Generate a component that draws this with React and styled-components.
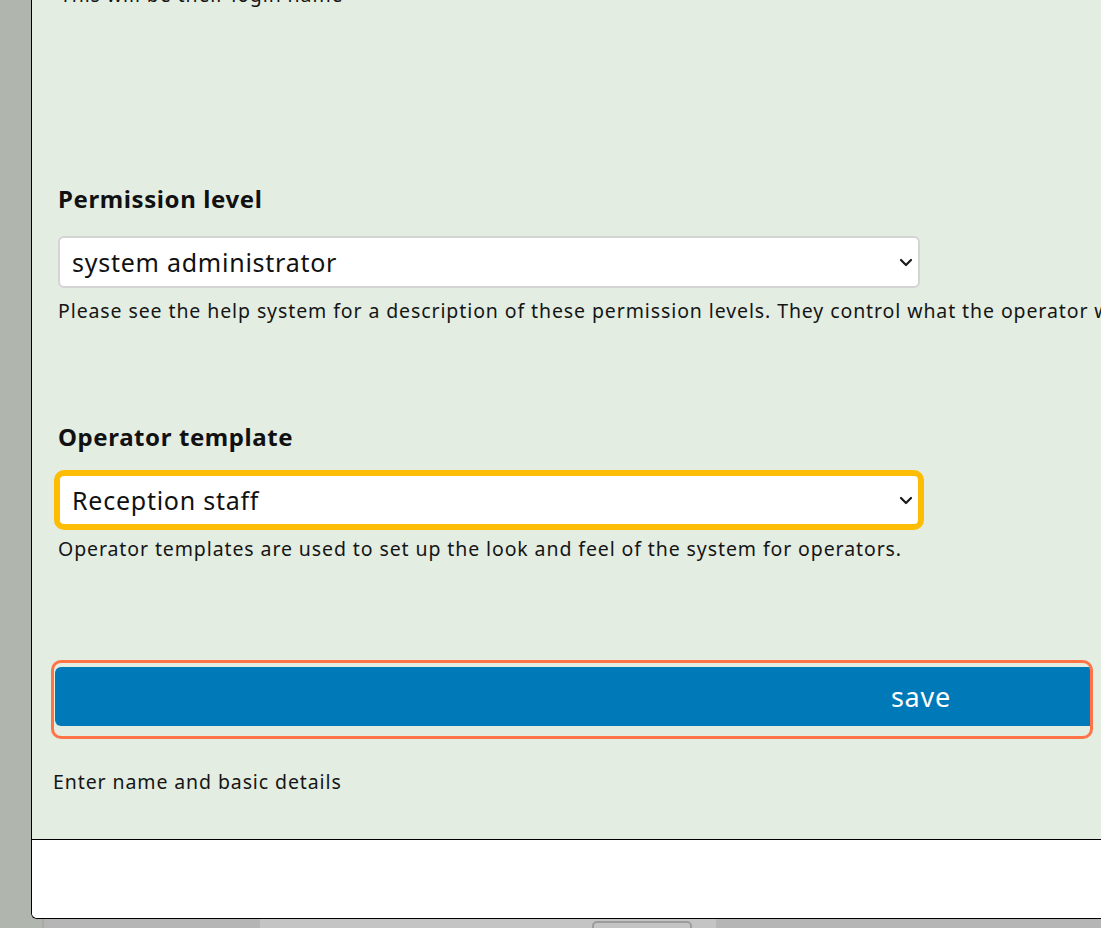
import React from 'react';
import styled, { createGlobalStyle } from 'styled-components';

const GlobalStyle = createGlobalStyle`
  html, body {
    margin: 0;
    padding: 0;
    overflow: hidden;
    background: #b0b5ad;
    font-family: "Noto Sans", "Liberation Sans", sans-serif;
    color: #141414;
  }
`;

const Page = styled.div`
  width: 1101px;
  height: 928px;
  overflow: hidden;
  display: flex;
  flex-direction: column;
`;

const Stage = styled.div`
  display: flex;
  flex: 0 0 auto;
`;

const Gutter = styled.div`
  width: 31px;
  flex: 0 0 31px;
`;

const Panel = styled.div`
  flex: 0 0 1300px;
  width: 1300px;
  border-left: 1px solid #000;
  border-bottom: 1px solid #000;
  border-bottom-left-radius: 6px;
  overflow: hidden;
  background: #fff;
`;

const Body = styled.div`
  background: #e3ede2;
  padding: 0 0 45px 26px;
  display: flex;
  flex-direction: column;
  align-items: flex-start;
`;

const Hint = styled.p`
  margin: ${p => p.$top || 0}px 0 0 ${p => p.$left || 0}px;
  font-size: 19.5px;
  line-height: 24px;
  letter-spacing: 0.9px;
  white-space: nowrap;
  color: #151515;
`;

const Label = styled.label`
  margin-top: ${p => p.$top}px;
  font-size: 24px;
  line-height: 29px;
  font-weight: 700;
  letter-spacing: 0.6px;
  color: #111;
`;

const SelectWrap = styled.div`
  position: relative;
  margin-top: 23px;
  width: 862px;
`;

const Select = styled.select`
  appearance: none;
  -webkit-appearance: none;
  display: block;
  width: 100%;
  height: 52px;
  box-sizing: border-box;
  padding: 0 40px 0 12px;
  border: 2px solid ${p => (p.$focused ? '#fcbd04' : '#d4d4d4')};
  border-radius: 6px;
  background: #fff;
  font-family: "Noto Sans", "Liberation Sans", sans-serif;
  font-size: 25px;
  letter-spacing: 0.75px;
  color: #111;
  outline: none;
  box-shadow: ${p => (p.$focused ? '0 0 0 4px #fcbd04' : 'none')};
`;

const Chevron = styled.svg`
  position: absolute;
  right: 7px;
  top: 22px;
  pointer-events: none;
`;

const SaveRing = styled.div`
  margin: 99px 0 0 -7px;
  width: 1042px;
  box-sizing: border-box;
  height: 79px;
  border: 3px solid #ff7447;
  border-radius: 10px;
  padding: 4px 0 0 1px;
  overflow: hidden;
`;

const SaveButton = styled.button`
  display: block;
  width: 1732px;
  height: 59px;
  border: 0;
  border-radius: 6px;
  background: #0079b9;
  color: #fff;
  font-family: "Noto Sans", "Liberation Sans", sans-serif;
  font-size: 27px;
  letter-spacing: 0.8px;
  text-align: center;
  padding: 0;
  cursor: pointer;
`;

const Footer = styled.div`
  height: 78px;
  border-top: 1px solid #000;
  background: #fff;
`;

const BottomBar = styled.div`
  flex: 1;
  display: flex;
  background: #b5b5b5;
`;

const BarEdge = styled.div`
  width: 42px;
  background: #b0b5ad;
  border-right: 2px solid #a9a9a9;
`;

const BarSpacer = styled.div`
  width: 216px;
`;

const BarMiddle = styled.div`
  width: 456px;
  background: #c4c4c4;
  display: flex;
  padding-left: 332px;
  box-sizing: border-box;
  padding-top: 2px;
`;

const BarTab = styled.div`
  width: 100px;
  height: 14px;
  border: 2px solid #9c9c9c;
  border-radius: 5px;
  box-sizing: border-box;
`;

const ChevronIcon = () => (
  <Chevron width="14" height="9" viewBox="0 0 14 9">
    <path d="M2 2l5 5 5-5" fill="none" stroke="#1a1a1a" strokeWidth="2.2" strokeLinecap="round" strokeLinejoin="round" />
  </Chevron>
);

const Field = ({ top, label, value, options, help, focused }) => (
  <>
    <Label $top={top}>{label}</Label>
    <SelectWrap>
      <Select defaultValue={value} $focused={focused}>
        {options.map(o => (
          <option key={o}>{o}</option>
        ))}
      </Select>
      <ChevronIcon />
    </SelectWrap>
    <Hint $top={11}>{help}</Hint>
  </>
);

export default function App() {
  return (
    <>
      <GlobalStyle />
      <Page>
        <Stage>
          <Gutter />
          <Panel>
            <Body>
              <Hint $top={-17} $left={2}>This will be their login name</Hint>
              <Field
                top={177}
                label="Permission level"
                value="system administrator"
                options={['system administrator', 'manager', 'operator']}
                help="Please see the help system for a description of these permission levels. They control what the operator will be able to do."
              />
              <Field
                top={99}
                focused
                label="Operator template"
                value="Reception staff"
                options={['Reception staff', 'Manager', 'Accounts']}
                help="Operator templates are used to set up the look and feel of the system for operators."
              />
              <SaveRing>
                <SaveButton>save</SaveButton>
              </SaveRing>
              <Hint $top={31} $left={-5}>Enter name and basic details</Hint>
            </Body>
            <Footer />
          </Panel>
        </Stage>
        <BottomBar>
          <BarEdge />
          <BarSpacer />
          <BarMiddle>
            <BarTab />
          </BarMiddle>
        </BottomBar>
      </Page>
    </>
  );
}
